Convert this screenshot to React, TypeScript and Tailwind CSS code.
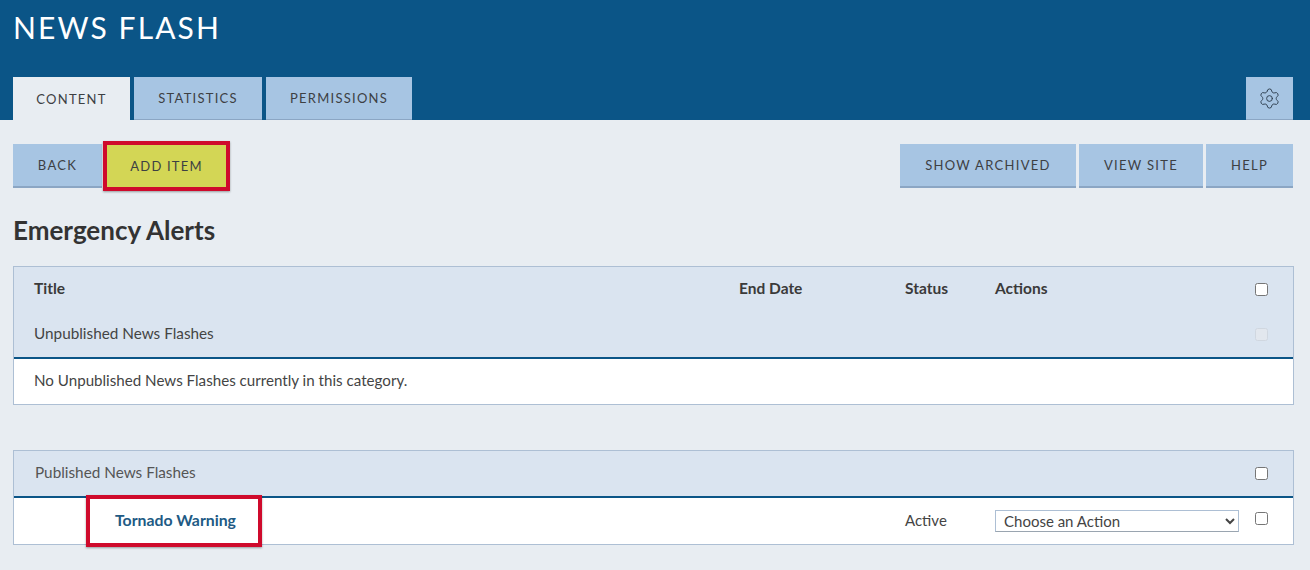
import { Settings } from 'lucide-react'

const FONT = "font-['Lato','Open_Sans',sans-serif]"

function Tab({ label, active, w }: { label: string; active?: boolean; w: string }): JSX.Element {
  return (
    <div
      className={`${w} h-[43px] pt-[2px] flex items-center justify-center text-[13px] tracking-[1.25px] text-[#3d4043] ${
        active ? 'bg-[#e8edf2]' : 'bg-[#a7c5e3] border-b border-[#8ba6c4]'
      }`}
    >
      {label}
    </div>
  )
}

function ToolButton({ label, w }: { label: string; w: string }): JSX.Element {
  return (
    <div className={`${w} h-[44px] pt-[2px] flex items-center justify-center bg-[#a7c5e3] border-b-2 border-[#8ba6c4] text-[13px] tracking-[1.3px] text-[#3d4043]`}>
      {label}
    </div>
  )
}

function Check({ faded }: { faded?: boolean }): JSX.Element {
  return (
    <span
      className={`block w-[13px] h-[13px] rounded-[2.5px] border ${
        faded ? 'border-[#d0d7e0] bg-[#e2e7ee]' : 'border-[#767676] bg-white'
      }`}
    />
  )
}

export default function App(): JSX.Element {
  return (
    <div className={`${FONT} w-[1310px] h-[570px] overflow-hidden bg-[#e8edf2] text-[#3a3a3a]`}>
      {/* Header */}
      <div className="h-[120px] bg-[#0b5587] px-[13px] flex flex-col">
        <div className="h-[77px] pt-[8px] text-[30px] leading-[38px] tracking-[2.1px] text-white">NEWS FLASH</div>
        <div className="flex items-start">
          <div className="flex gap-[4px]">
            <Tab label="CONTENT" active w="w-[117px]" />
            <Tab label="STATISTICS" w="w-[128px]" />
            <Tab label="PERMISSIONS" w="w-[146px]" />
          </div>
          <div className="ml-auto mr-[4px] w-[47px] h-[43px] flex items-center justify-center bg-[#a7c5e3] border-b border-[#8ba6c4]">
            <Settings size={23} strokeWidth={1} className="text-[#2f4050]" />
          </div>
        </div>
      </div>

      {/* Toolbar */}
      <div className="mt-[21px] pl-[13px] pr-[17px] flex items-center h-[50px]">
        <ToolButton label="BACK" w="w-[89px]" />
        <div className="ml-[1px] w-[127px] h-[50px] pt-[1px] border-[4px] border-[#cf0a2c] bg-[#d3d655] shadow-[0_1px_2px_rgba(0,0,0,0.35)] flex items-center justify-center text-[13px] tracking-[1.2px] text-[#3d4043]">
          ADD ITEM
        </div>
        <div className="ml-auto flex gap-[3px]">
          <ToolButton label="SHOW ARCHIVED" w="w-[176px]" />
          <ToolButton label="VIEW SITE" w="w-[124px]" />
          <ToolButton label="HELP" w="w-[87px]" />
        </div>
      </div>

      <h1 className="mx-[13px] mt-[21px] h-[37px] text-[26px] leading-[36px] font-bold text-[#333]">Emergency Alerts</h1>

      {/* Unpublished table */}
      <div className="mt-[17px] mx-[13px] w-[1281px] h-[139px] border border-[#adbfd4] bg-white flex flex-col">
        <div className="h-[45px] bg-[#dae4f0] flex items-center text-[15.5px] font-bold text-[#3a3a3a]">
          <span className="ml-[20px] w-[705px] pb-[2px]">Title</span>
          <span className="w-[166px] pb-[2px]">End Date</span>
          <span className="w-[90px] pb-[2px]">Status</span>
          <span className="pb-[2px]">Actions</span>
          <span className="ml-auto mr-[25px]"><Check /></span>
        </div>
        <div className="h-[47px] bg-[#dae4f0] border-b-2 border-[#0b5587] flex items-center text-[15.3px] text-[#444]">
          <span className="ml-[20px] pb-[3px]">Unpublished News Flashes</span>
          <span className="ml-auto mr-[25px]"><Check faded /></span>
        </div>
        <div className="flex-1 flex items-center pl-[20px] pb-[3px] text-[15.15px] text-[#444]">
          No Unpublished News Flashes currently in this category.
        </div>
      </div>

      {/* Published table */}
      <div className="mt-[45px] mx-[13px] w-[1281px] h-[95px] border border-[#adbfd4] bg-white flex flex-col">
        <div className="h-[47px] bg-[#dae4f0] border-b-2 border-[#0b5587] flex items-center text-[15.3px] text-[#555]">
          <span className="ml-[21px] pb-[3px]">Published News Flashes</span>
          <span className="ml-auto mr-[25px]"><Check /></span>
        </div>
        <div className="relative flex-1 flex items-center text-[15px] text-[#444]">
          <span className="ml-[101px] w-[790px] pb-[3px] text-[15.8px] font-bold text-[#215a84]">Tornado Warning</span>
          <span className="w-[90px] pb-[2px]">Active</span>
          <select
            defaultValue="choose"
            className="w-[244px] h-[22px] pl-[4px] pb-[3px] text-[15px] leading-[18px] border border-[#adbfd4] border-b-[#9aa5b0] bg-white text-[#444]"
          >
            <option value="choose">Choose an Action</option>
          </select>
          <span className="ml-auto mr-[25px] -mt-[5px]"><Check /></span>
          {/* red annotation box */}
          <div className="absolute left-[72px] -top-[3px] w-[176px] h-[52px] border-[4px] border-[#cf0a2c] shadow-[0_1px_2px_rgba(0,0,0,0.35)]" />
        </div>
      </div>
    </div>
  )
}
